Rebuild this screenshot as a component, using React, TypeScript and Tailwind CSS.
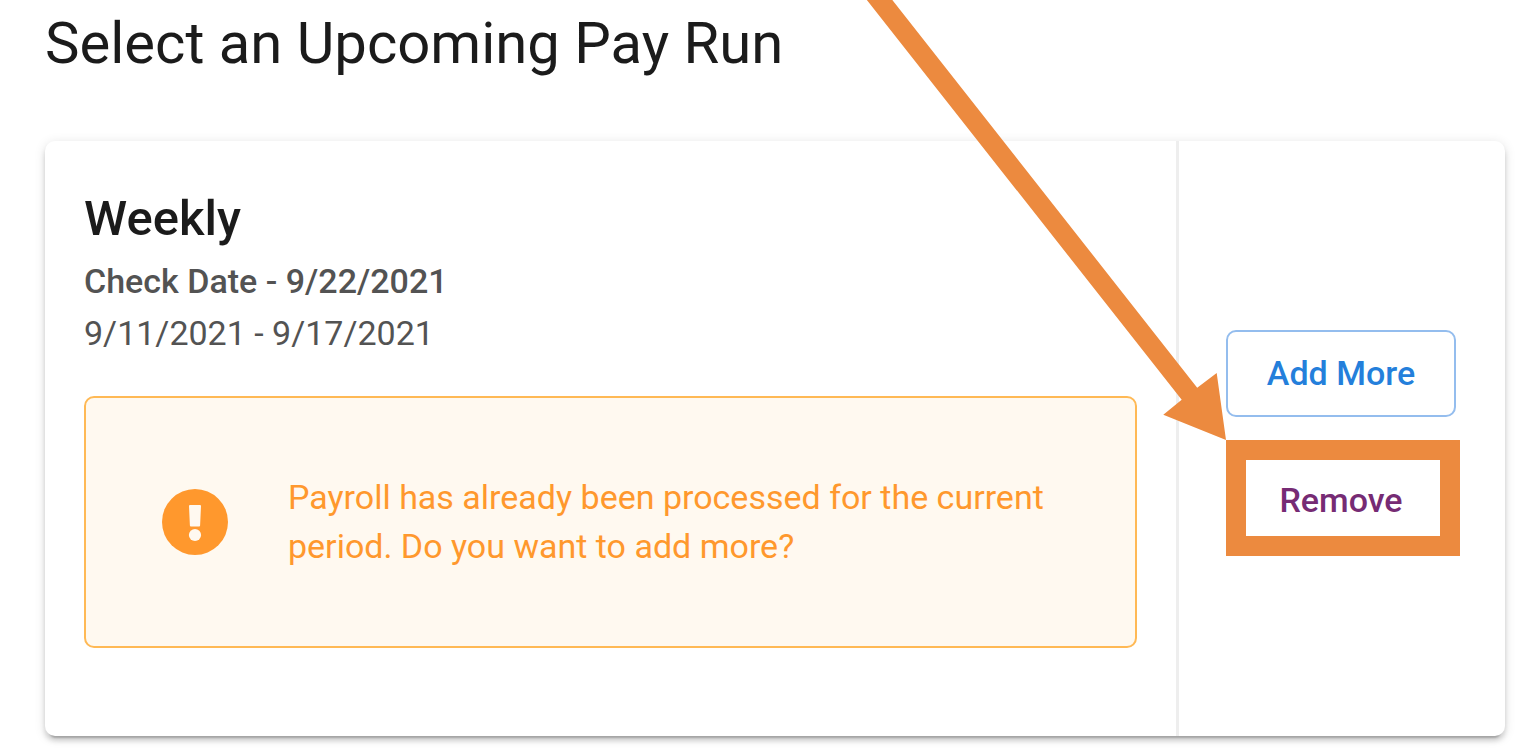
import type { ReactNode } from "react";

function AlertIcon() {
  return (
    <svg viewBox="0 0 66 66" className="size-[66px] shrink-0" aria-hidden="true">
      <circle cx="33" cy="33" r="33" fill="#ff982d" />
      <path
        d="M28 16h10a1 1 0 0 1 1 1l-.9 19.4a1 1 0 0 1-1 1h-8.2a1 1 0 0 1-1-1L27 17a1 1 0 0 1 1-1z"
        fill="#fff9f0"
      />
      <circle cx="33" cy="46" r="6.1" fill="#fff9f0" />
    </svg>
  );
}

function Callout({ children }: { children: ReactNode }) {
  return (
    <div className="relative">
      {children}
      <div className="pointer-events-none absolute -top-[17px] -right-1 -bottom-3 left-0">
        <div className="h-full border-20 border-[#ec8a3f]" />
        <svg
          viewBox="0 0 376 460"
          className="absolute right-full bottom-full h-[460px] w-[376px] max-w-none"
          aria-hidden="true"
        >
          <path
            d="M1.1 0H26.6L347.2 407.7L366.7 393L376 460L313.3 434.7L331.7 419.7Z"
            fill="#ec8a3f"
          />
        </svg>
      </div>
    </div>
  );
}

export default function App() {
  return (
    <main className="overflow-hidden bg-white pt-[11px] pr-[33px] pb-3 pl-[45px] font-['Roboto',sans-serif]">
      <h1 className="text-[58px] leading-[64px] text-[#1b1b1b]">Select an Upcoming Pay Run</h1>

      <section className="mt-[66px] flex rounded-[10px] bg-white shadow-[0_7px_2px_-5px_rgba(0,0,0,0.2),0_5px_5px_0_rgba(0,0,0,0.14),0_2px_12px_0_rgba(0,0,0,0.12)]">
        <div className="min-w-0 flex-1 border-r-3 border-[#eeeeee] px-[39px] pt-[50px] pb-[88px]">
          <h2 className="text-[49px] leading-[56px] font-medium text-[#1b1b1b]">Weekly</h2>
          <p className="mt-2 text-[34px] leading-[52px] font-medium text-[#535353]">
            Check Date - 9/22/2021
          </p>
          <p className="text-[34px] leading-[52px] text-[#535353]">9/11/2021 - 9/17/2021</p>

          <div
            role="alert"
            className="mt-[37px] flex items-center gap-[60px] rounded-[10px] border-2 border-[#ffb955] bg-[#fff9f0] px-[76px] py-[75px]"
          >
            <AlertIcon />
            <p className="text-[34px] leading-[49px] text-[#ff982d]">
              Payroll has already been processed for the current period. Do you want to add more?
            </p>
          </div>
        </div>

        <div className="flex flex-col justify-center gap-10 pr-[49px] pb-1 pl-[47px]">
          <button
            type="button"
            className="h-[87px] w-[230px] rounded-[10px] border-2 border-[#94bdee] text-[34px] font-medium text-[#247fdb]"
          >
            Add More
          </button>
          <Callout>
            <button
              type="button"
              className="h-[87px] w-[230px] rounded-[10px] text-[34px] font-medium text-[#762b74]"
            >
              Remove
            </button>
          </Callout>
        </div>
      </section>
    </main>
  );
}
